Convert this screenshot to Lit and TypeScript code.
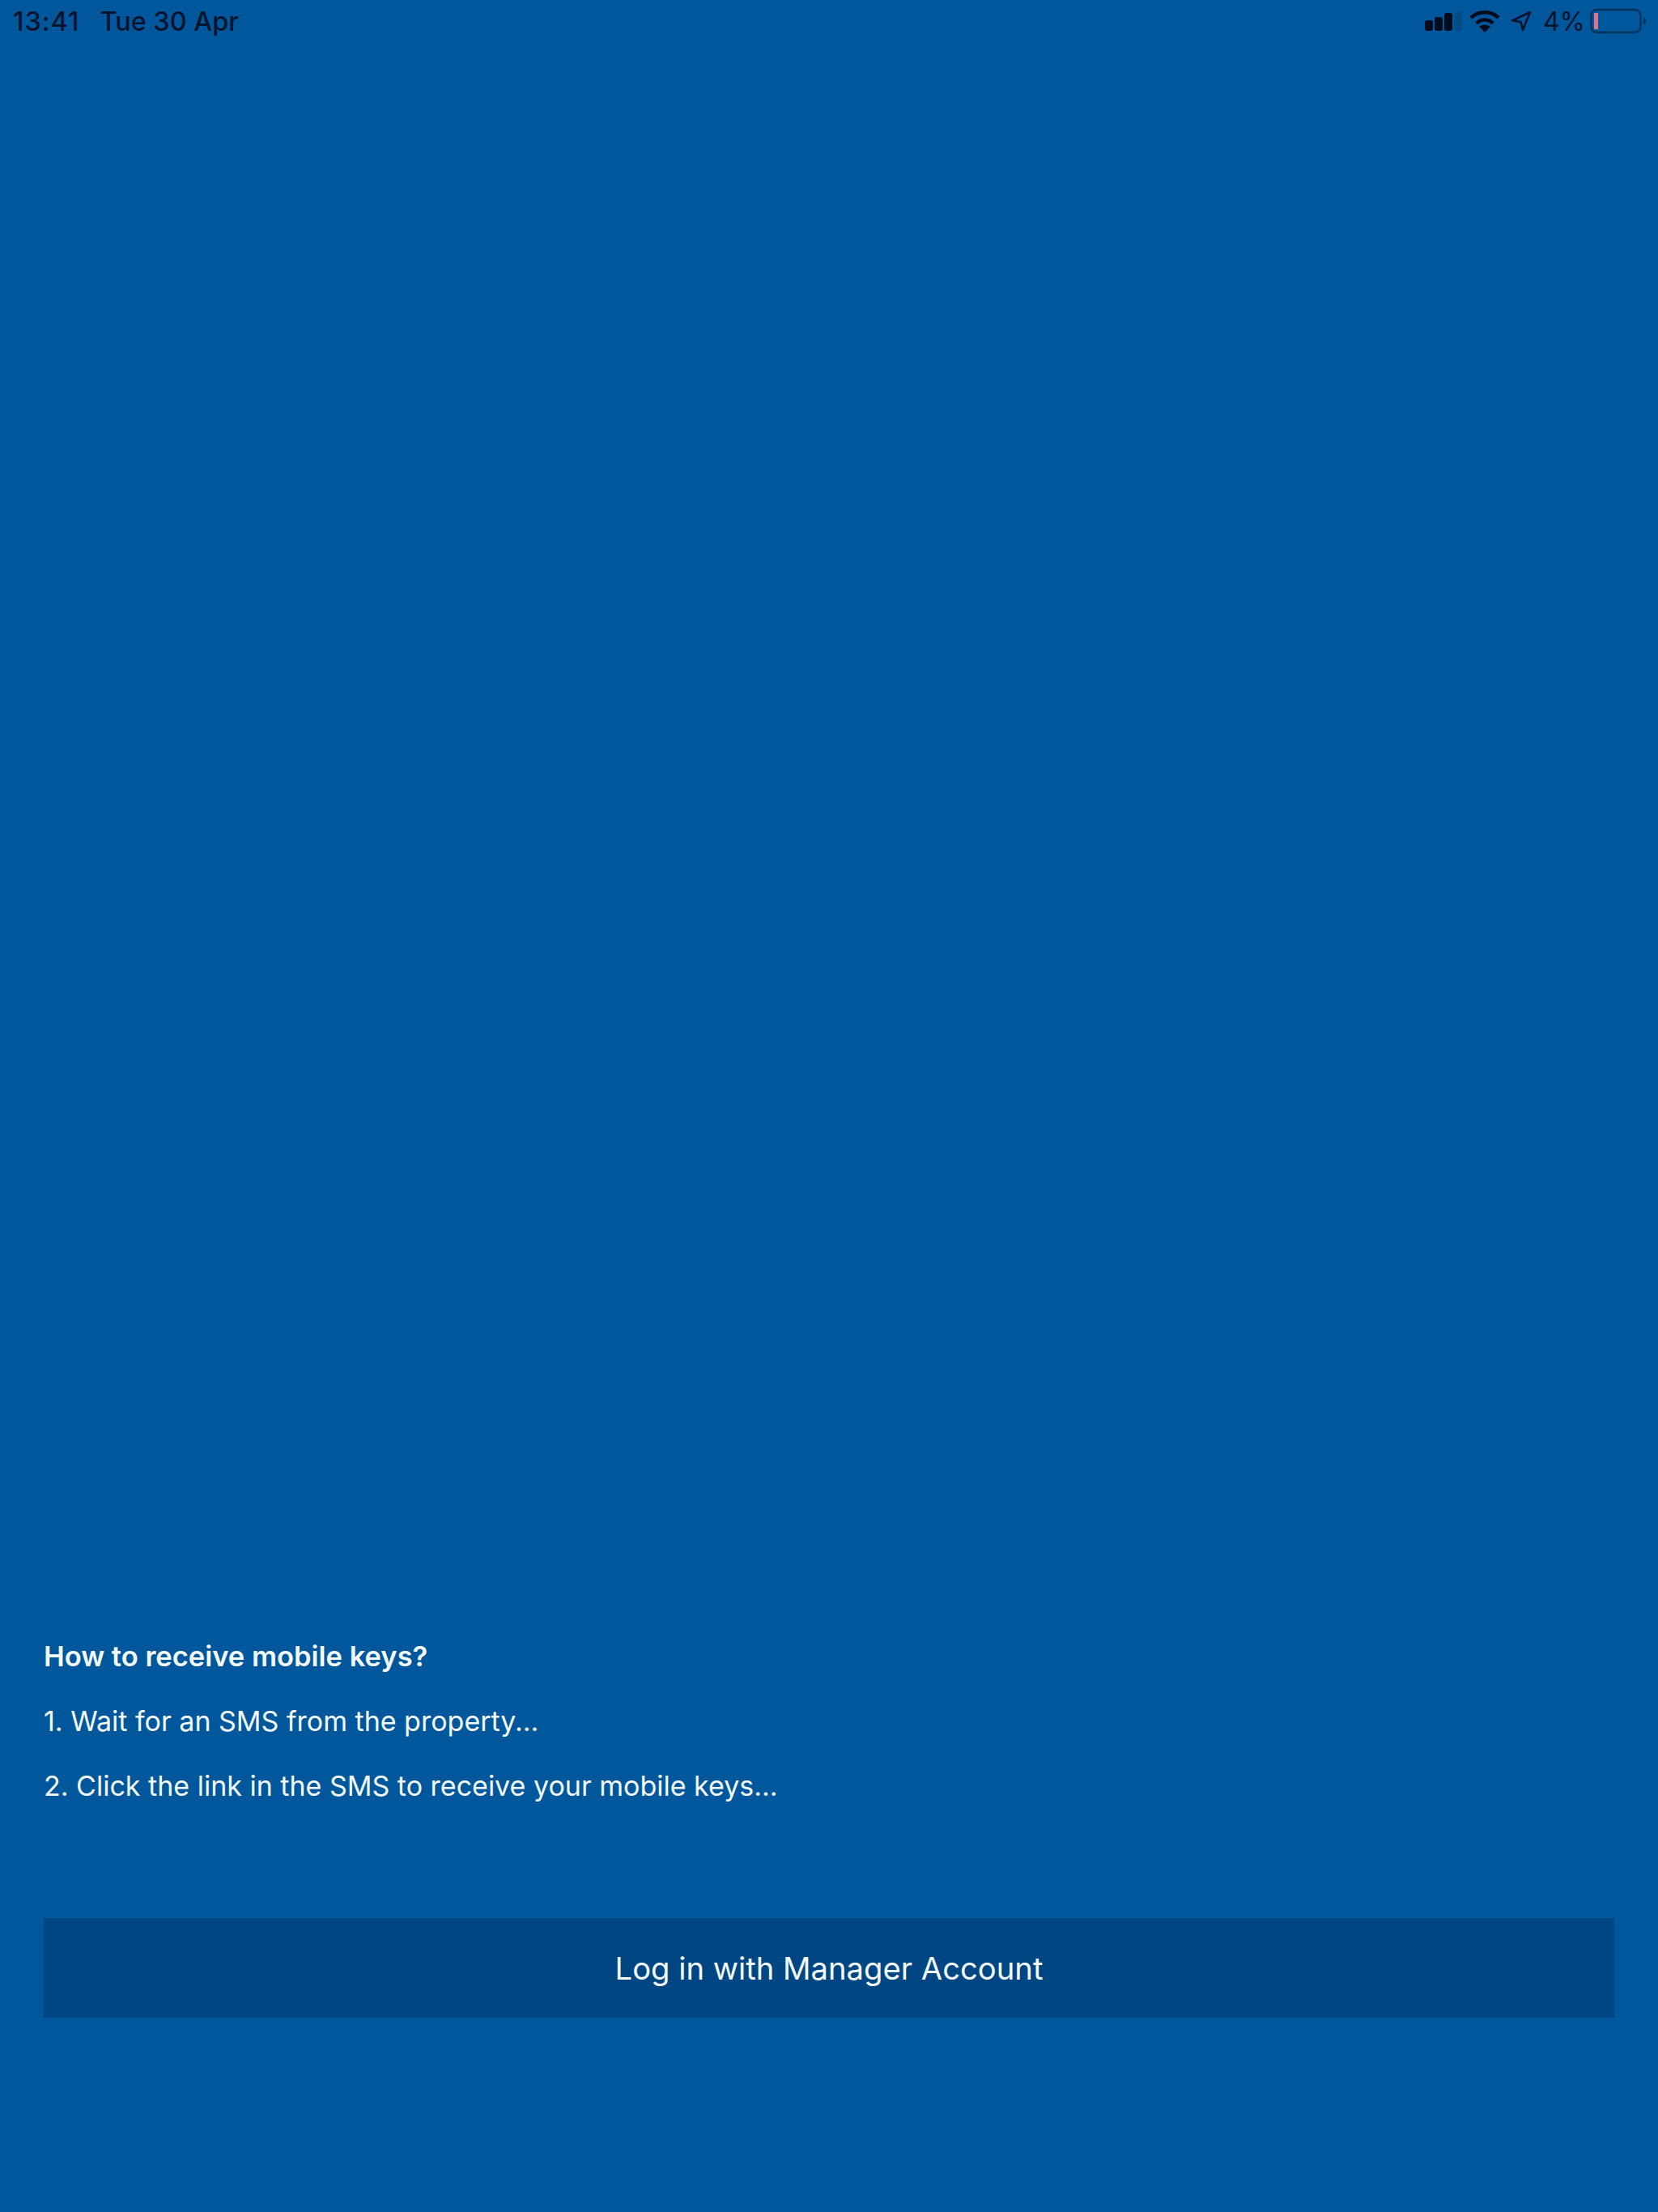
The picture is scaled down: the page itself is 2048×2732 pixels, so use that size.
import { LitElement, html, css } from "lit";
import { customElement } from "lit/decorators.js";

@customElement("app-root")
export class AppRoot extends LitElement {
  static styles = css`
    :host {
      display: flex;
      flex-direction: column;
      width: 2048px;
      height: 2732px;
      background: #00579b;
      font-family: Inter, "Liberation Sans", sans-serif;
      color: #f4fbff;
      overflow: hidden;
    }
    .status {
      display: flex;
      align-items: center;
      height: 52px;
      padding: 0 14px 0 16px;
      color: #03142e;
      font-size: 32.4px;
      font-weight: 500;
      flex: none;
    }
    .time { margin-right: 25px; letter-spacing: 1px; }
    .spacer { flex: 1; }
    .right { margin-left: auto; display: flex; align-items: center; }
    .signal { width: 46px; height: 24px; margin-right: 9px; }
    .wifi { width: 38px; height: 28px; margin-right: 13px; }
    .loc { width: 26px; height: 26px; margin-right: 14px; }
    .pct { margin-right: 6px; font-weight: 400; font-size: 32px; }
    .batt { width: 70px; height: 32px; }
    .info {
      display: flex;
      flex-direction: column;
      gap: 39px;
      padding: 0 54px;
      font-size: 34px;
      line-height: 41px;
      flex: none;
    }
    .info p { margin: 0; }
    .head { font-weight: 600; font-size: 34.5px; }
    .btn {
      flex: none;
      display: flex;
      align-items: center;
      justify-content: center;
      margin: 143px 54px 240px;
      height: 123px;
      background: #004682;
      font-size: 38.2px;
    }
  `;

  render() {
    return html`
      <div class="status">
        <span class="time">13:41</span><span>Tue 30 Apr</span>
        <div class="right">
          <svg class="signal" viewBox="0 0 46 24">
            <rect x="0" y="11" width="10" height="13" rx="3" fill="#020c1f"></rect>
            <rect x="12" y="7" width="10" height="17" rx="3" fill="#020c1f"></rect>
            <rect x="24" y="2" width="10" height="22" rx="3" fill="#020c1f"></rect>
            <rect x="37" y="0" width="9" height="24" rx="2" fill="#03142e" opacity="0.18"></rect>
          </svg>
          <svg class="wifi" viewBox="0 0 38 28" fill="none" stroke="#020c1f" stroke-width="4.6">
            <path d="M2 10 C11 1 27 1 36 10"></path>
            <path d="M9 17 C14 11 24 11 29 17"></path>
            <path d="M12 21 L19 28 L26 21 C22 17.5 16 17.5 12 21 Z" fill="#020c1f" stroke="none"></path>
          </svg>
          <svg class="loc" viewBox="0 0 26 26" fill="none" stroke="#03142e" stroke-width="2.6" stroke-linejoin="round">
            <path d="M24 2 L2 12.5 L12.5 14 L15 24 Z"></path>
          </svg>
          <span class="pct">4%</span>
          <svg class="batt" viewBox="0 0 70 32" fill="none">
            <rect x="1.5" y="2" width="61" height="28" rx="7" stroke="#03142e" stroke-opacity="0.55" stroke-width="2.4"></rect>
            <rect x="5" y="6" width="5" height="20" fill="#d9728c"></rect>
            <path d="M66 11 L70 16 L66 21 Z" fill="#03142e" fill-opacity="0.5"></path>
          </svg>
        </div>
      </div>
      <div class="spacer"></div>
      <div class="info">
        <p class="head">How to receive mobile keys?</p>
        <p>1. Wait for an SMS from the property...</p>
        <p>2. Click the link in the SMS to receive your mobile keys...</p>
      </div>
      <div class="btn">Log in with Manager Account</div>
    `;
  }
}
